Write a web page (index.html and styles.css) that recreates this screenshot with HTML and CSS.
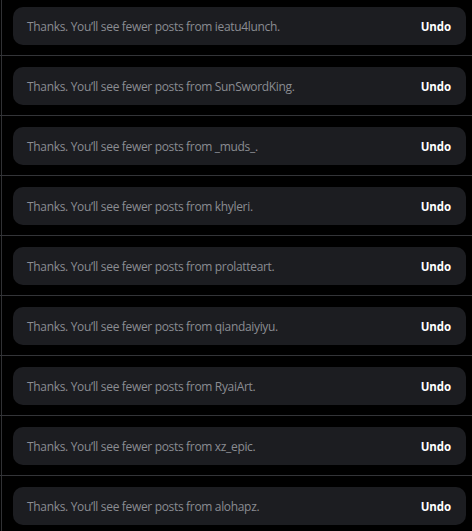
FILE: index.html
```html
<!DOCTYPE html>
<html>
<head>
<meta charset="utf-8">
<link rel="stylesheet" href="styles.css">
</head>
<body>
<div class="list">
  <div class="row"><div class="card"><span class="msg">Thanks. You’ll see fewer posts from ieatu4lunch.</span><button class="undo">Undo</button></div></div>
  <div class="row"><div class="card"><span class="msg">Thanks. You’ll see fewer posts from SunSwordKing.</span><button class="undo">Undo</button></div></div>
  <div class="row"><div class="card"><span class="msg">Thanks. You’ll see fewer posts from _muds_.</span><button class="undo">Undo</button></div></div>
  <div class="row"><div class="card"><span class="msg">Thanks. You’ll see fewer posts from khyleri.</span><button class="undo">Undo</button></div></div>
  <div class="row"><div class="card"><span class="msg">Thanks. You’ll see fewer posts from prolatteart.</span><button class="undo">Undo</button></div></div>
  <div class="row"><div class="card"><span class="msg">Thanks. You’ll see fewer posts from qiandaiyiyu.</span><button class="undo">Undo</button></div></div>
  <div class="row"><div class="card"><span class="msg">Thanks. You’ll see fewer posts from RyaiArt.</span><button class="undo">Undo</button></div></div>
  <div class="row"><div class="card"><span class="msg">Thanks. You’ll see fewer posts from xz_epic.</span><button class="undo">Undo</button></div></div>
  <div class="row"><div class="card"><span class="msg">Thanks. You’ll see fewer posts from alohapz.</span><button class="undo">Undo</button></div></div>
</div>
</body>
</html>
```
FILE: styles.css
```css
html, body {
  margin: 0;
  padding: 0;
  background: #000;
  height: 100%;
  overflow: hidden;
}
body {
  padding-left: 1px;
  font-family: "Open Sans", "Noto Sans", sans-serif;
}
.list {
  border-left: 1px solid #303134;
  min-height: 100%;
}
.row {
  padding: 11px 6px 10px 13px;
  border-top: 1px solid #333438;
  margin-left: -2px;
}
.row:first-child {
  border-top: none;
  padding-top: 7px;
}
.card {
  height: 38px;
  background: #1c1d21;
  border-radius: 10px;
  display: flex;
  align-items: center;
  justify-content: space-between;
  padding: 0 15px 0 14px;
}
.msg {
  color: #8a8c92;
  font-size: 12px;
  letter-spacing: -0.33px;
}
.undo {
  background: none;
  border: none;
  padding: 0;
  color: #fff;
  font-family: "Open Sans", "Noto Sans", sans-serif;
  font-weight: 700;
  font-size: 11.5px;
  letter-spacing: -0.1px;
}
```
